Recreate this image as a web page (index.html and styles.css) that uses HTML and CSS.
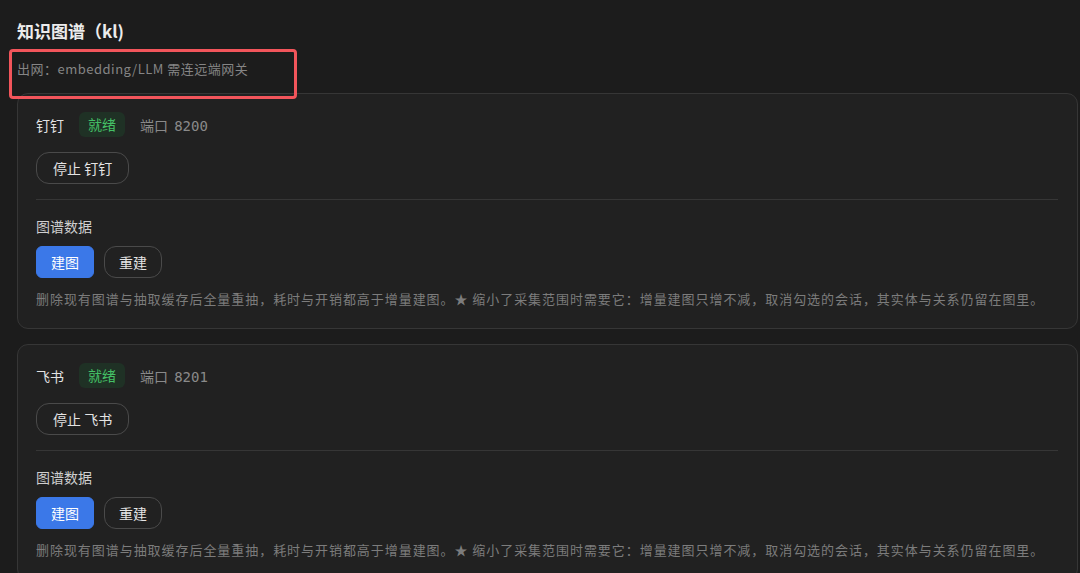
FILE: index.html
```html
<!DOCTYPE html>
<html lang="zh-CN">
<head>
<meta charset="utf-8">
<title>知识图谱</title>
<link rel="stylesheet" href="styles.css">
</head>
<body>
<div class="page">
  <h1 class="title">知识图谱（kl)</h1>
  <p class="subtitle">出网：embedding/LLM 需连远端网关</p>
  <div class="highlight"></div>

  <section class="card">
    <div class="status-row">
      <span class="name">钉钉</span>
      <span class="badge">就绪</span>
      <span class="port">端口 <span class="mono">8200</span></span>
    </div>
    <div class="actions">
      <button class="btn btn-outline btn-pill">停止 钉钉</button>
    </div>
    <hr class="divider">
    <div class="section-label">图谱数据</div>
    <div class="actions">
      <button class="btn btn-primary">建图</button>
      <button class="btn btn-outline">重建</button>
    </div>
    <p class="desc">删除现有图谱与抽取缓存后全量重抽，耗时与开销都高于增量建图。★ 缩小了采集范围时需要它：增量建图只增不减，取消勾选的会话，其实体与关系仍留在图里。</p>
  </section>

  <section class="card">
    <div class="status-row">
      <span class="name">飞书</span>
      <span class="badge">就绪</span>
      <span class="port">端口 <span class="mono">8201</span></span>
    </div>
    <div class="actions">
      <button class="btn btn-outline btn-pill">停止 飞书</button>
    </div>
    <hr class="divider">
    <div class="section-label">图谱数据</div>
    <div class="actions">
      <button class="btn btn-primary">建图</button>
      <button class="btn btn-outline">重建</button>
    </div>
    <p class="desc">删除现有图谱与抽取缓存后全量重抽，耗时与开销都高于增量建图。★ 缩小了采集范围时需要它：增量建图只增不减，取消勾选的会话，其实体与关系仍留在图里。</p>
  </section>
</div>
</body>
</html>
```

FILE: styles.css
```css
* { box-sizing: border-box; }
html, body {
  margin: 0;
  padding: 0;
  background: #1c1c1c;
  color: #e4e4e4;
  font-family: "Noto Sans CJK SC", "Noto Sans", sans-serif;
  overflow: hidden;
}
.page {
  position: relative;
  padding: 19px 2px 0 17px;
}
.title {
  margin: 0;
  font-size: 17px;
  line-height: 24px;
  font-weight: 600;
  color: #ececec;
}
.subtitle {
  margin: 17px 0 0 0;
  font-size: 13px;
  line-height: 18px;
  letter-spacing: 0.5px;
  color: #858585;
}
.highlight {
  position: absolute;
  left: 9px;
  top: 49px;
  width: 288px;
  height: 50px;
  border: 3px solid #f2555b;
  border-radius: 4px;
}
.card {
  margin-top: 15px;
  background: #212121;
  border: 1px solid #363636;
  border-radius: 11px;
  padding: 18px 19px 19px 18px;
}
.card + .card { margin-top: 15px; }
.status-row {
  display: flex;
  align-items: center;
  height: 25px;
}
.name {
  font-size: 14px;
  color: #e2e2e2;
  margin-right: 15px;
}
.badge {
  font-size: 14px;
  line-height: 25px;
  height: 25px;
  padding: 0 9px;
  border-radius: 6px;
  background: #1f3125;
  color: #45c066;
  margin-right: 15px;
}
.port {
  font-size: 14px;
  color: #8a8a8a;
}
.mono {
  font-family: "DejaVu Sans Mono", "Liberation Mono", monospace;
  margin-left: 3px;
}
.actions {
  display: flex;
  gap: 10px;
  margin-top: 15px;
}
.btn {
  font-family: inherit;
  font-size: 14px;
  height: 32px;
  padding: 0 14px;
  border-radius: 12px;
  cursor: pointer;
}
.btn-outline {
  background: transparent;
  border: 1px solid #4a4a4a;
  color: #e4e4e4;
}
.btn-pill { padding: 0 16px; border-radius: 13px; }
.btn-primary {
  background: #3b78e8;
  border: 1px solid #3b78e8;
  color: #ffffff;
  border-radius: 6px;
}
.divider {
  border: 0;
  border-top: 1px solid #363636;
  margin: 15px 0 0 0;
}
.section-label {
  margin-top: 16px;
  font-size: 14px;
  line-height: 20px;
  color: #cfcfcf;
}
.section-label + .actions { margin-top: 10px; }
.desc {
  margin: 11px 0 0 0;
  font-size: 13px;
  line-height: 20px;
  letter-spacing: 0.95px;
  color: #7c7c7c;
  white-space: nowrap;
}
```
